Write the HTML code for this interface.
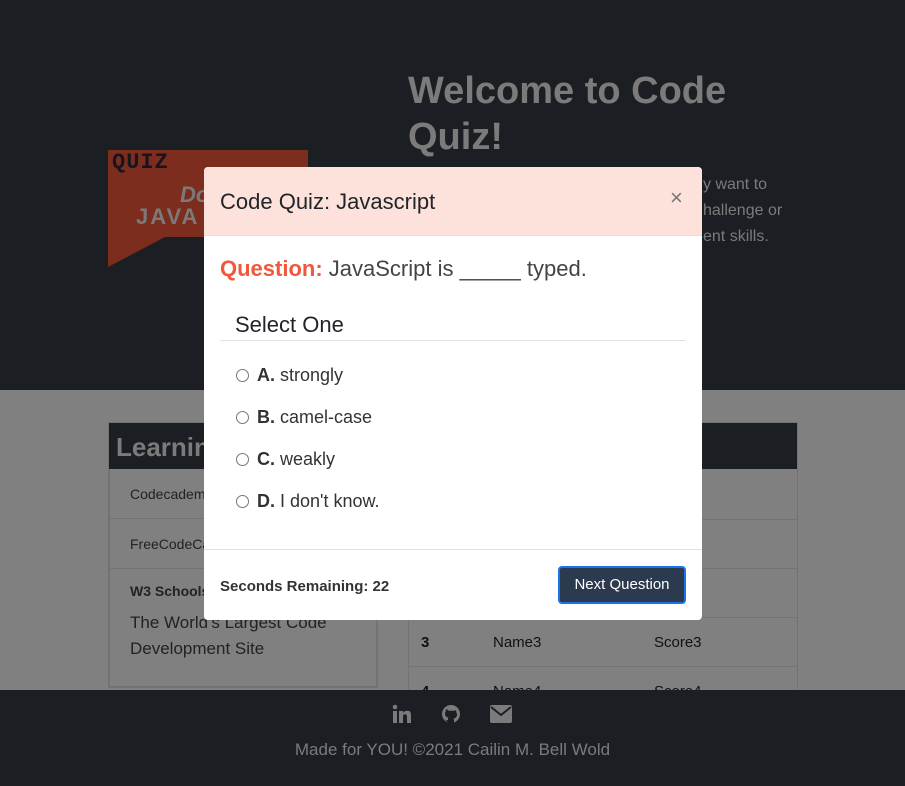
<!DOCTYPE html>
<html><head><meta charset="utf-8"><style>
*{margin:0;padding:0;box-sizing:border-box}
body{width:905px;height:786px;overflow:hidden;position:relative;background:#808080;font-family:"Liberation Sans",sans-serif}
.a{position:absolute}
</style></head><body>
<div class="a" style="left:0;top:0;width:905px;height:390px;background:#1b1e22"></div>
<!-- logo -->
<svg class="a" style="left:108px;top:150px" width="200" height="120"><polygon points="0,0 200,0 200,87 57,87 0,117" fill="#7d2d1d"/></svg>
<div class="a" style="left:112px;top:150px;font:900 22px 'Liberation Mono',monospace;color:#15151f;letter-spacing:1px">QUIZ</div>
<div class="a" style="left:180px;top:182px;font:italic bold 22px 'Liberation Sans';color:#7a7a7a">Do</div>
<div class="a" style="left:136px;top:204px;font:900 22px 'Liberation Sans';color:#7a7a7a;letter-spacing:2px">JAVA</div>
<div class="a" style="left:408px;top:68px;font:bold 38px/46px 'Liberation Sans';color:#7b7b7b">Welcome to Code<br>Quiz!</div>
<div class="a" style="left:703px;top:172px;font:16px/26px 'Liberation Sans';color:#7b7b7b;white-space:nowrap">y want to<br>hallenge or<br>ent skills.</div>
<!-- cards -->
<div class="a" style="left:108px;top:422px;width:270px;height:266px;border:2px solid #737373;background:#808080"></div>
<div class="a" style="left:109px;top:423px;width:268px;height:46px;background:#1b1e22;color:#7b7b7b;font:bold 26px/48px 'Liberation Sans';padding-left:7px">Learning</div>
<div class="a" style="left:109px;top:518px;width:268px;border-top:1px solid #737373"></div>
<div class="a" style="left:109px;top:568px;width:268px;border-top:1px solid #737373"></div>
<div class="a" style="left:130px;top:486px;font:14px 'Liberation Sans';color:#222">Codecademy</div>
<div class="a" style="left:130px;top:536px;font:14px 'Liberation Sans';color:#222">FreeCodeCamp</div>
<div class="a" style="left:130px;top:583px;font:bold 14px 'Liberation Sans';color:#222">W3 Schools</div>
<div class="a" style="left:130px;top:610px;font:17px/26px 'Liberation Sans';color:#222">The World's Largest Code<br>Development Site</div>
<div class="a" style="left:408px;top:422px;width:390px;height:270px;border:1px solid #737373"></div>
<div class="a" style="left:409px;top:423px;width:388px;height:46px;background:#1b1e22"></div>
<div class="a" style="left:409px;top:519px;width:388px;border-top:1px solid #737373"></div>
<div class="a" style="left:409px;top:568px;width:388px;border-top:1px solid #737373"></div>
<div class="a" style="left:409px;top:617px;width:388px;border-top:1px solid #737373"></div>
<div class="a" style="left:409px;top:666px;width:388px;border-top:1px solid #737373"></div>
<div class="a" style="left:421px;top:634px;font:bold 15px 'Liberation Sans';color:#111">3</div>
<div class="a" style="left:493px;top:634px;font:15px 'Liberation Sans';color:#111">Name3</div>
<div class="a" style="left:654px;top:634px;font:15px 'Liberation Sans';color:#111">Score3</div>
<div class="a" style="left:421px;top:683px;font:bold 15px 'Liberation Sans';color:#111">4</div>
<div class="a" style="left:493px;top:683px;font:15px 'Liberation Sans';color:#111">Name4</div>
<div class="a" style="left:654px;top:683px;font:15px 'Liberation Sans';color:#111">Score4</div>
<!-- footer -->
<div class="a" style="left:0;top:690px;width:905px;height:96px;background:#1b1e22"></div>
<svg class="a" style="left:392px;top:704px" width="20" height="20" viewBox="0 0 20 20" fill="#7b7b7b"><rect x="1" y="7" width="4" height="12"/><circle cx="3" cy="3" r="2.3"/><path d="M7 7h4v2c1-2 3-2.3 4.5-2.3 3 0 3.5 2 3.5 5V19h-4v-6c0-1.5-.3-2.7-2-2.7s-2 1.2-2 2.7v6H7z"/></svg>
<svg class="a" style="left:441px;top:704px" width="20" height="20" viewBox="0 0 20 20"><circle cx="10" cy="10" r="9" fill="#7b7b7b"/><path d="M7 19v-3c-2 .5-3-1-3.5-2M13 19v-3c0-1-.5-1.5-.5-1.5 2-.3 3.5-1.2 3.5-4 0-1-.3-1.7-.9-2.3.2-.7.1-1.5-.1-2-1 0-1.7.5-2.2.8a8 8 0 0 0-4.6 0C6.7 5.7 6 5.2 5 5.2c-.2.5-.3 1.3-.1 2C4.3 7.8 4 8.5 4 9.5c0 2.8 1.5 3.7 3.5 4-.3.3-.5 1-.5 1.5V19" fill="#1b1e22"/></svg>
<svg class="a" style="left:490px;top:705px" width="22" height="18" viewBox="0 0 22 18"><rect x="0" y="0" width="22" height="18" rx="2" fill="#7b7b7b"/><path d="M1 2l10 8 10-8" stroke="#1b1e22" stroke-width="2" fill="none"/></svg>
<div class="a" style="left:0;top:740px;width:905px;text-align:center;font:17px 'Liberation Sans';color:#7b7b7b">Made for YOU! ©2021 Cailin M. Bell Wold</div>
<!-- modal -->
<div class="a" style="left:204px;top:167px;width:498px;height:453px;background:#fff;border-radius:4px;overflow:hidden">
 <div style="height:69px;background:#fde2dc;border-bottom:1px solid #e3dede;position:relative">
  <div class="a" style="left:16px;top:22px;font:22px 'Liberation Sans';color:#212529">Code Quiz: Javascript</div>
  <div class="a" style="left:466px;top:18px;font:22px 'Liberation Sans';color:#777">×</div>
 </div>
 <div class="a" style="left:16px;top:89px;font:22px 'Liberation Sans';color:#444;white-space:nowrap"><b style="color:#f2573b">Question:</b> JavaScript is _____ typed.</div>
 <div class="a" style="left:31px;top:145px;font:22px 'Liberation Sans';color:#212529">Select One</div>
 <div class="a" style="left:16px;top:173px;width:466px;border-top:1px solid #dee2e6"></div>
 <div class="a" style="left:32px;top:187px;font:18px/42px 'Liberation Sans';color:#333">
  <div><span style="display:inline-block;width:13px;height:13px;border:1px solid #777;border-radius:50%;margin-right:8px;vertical-align:-1px"></span><b>A.</b> strongly</div>
  <div><span style="display:inline-block;width:13px;height:13px;border:1px solid #777;border-radius:50%;margin-right:8px;vertical-align:-1px"></span><b>B.</b> camel-case</div>
  <div><span style="display:inline-block;width:13px;height:13px;border:1px solid #777;border-radius:50%;margin-right:8px;vertical-align:-1px"></span><b>C.</b> weakly</div>
  <div><span style="display:inline-block;width:13px;height:13px;border:1px solid #777;border-radius:50%;margin-right:8px;vertical-align:-1px"></span><b>D.</b> I don't know.</div>
 </div>
 <div class="a" style="left:0;top:382px;width:498px;border-top:1px solid #dee2e6"></div>
 <div class="a" style="left:16px;top:411px;font:bold 15px 'Liberation Sans';color:#333">Seconds Remaining: 22</div>
 <div class="a" style="left:354px;top:399px;width:128px;height:38px;background:#2b3a4e;border:2px solid #1a73e8;border-radius:4px;color:#fff;font:15px/34px 'Liberation Sans';text-align:center">Next Question</div>
</div>
</body></html>
